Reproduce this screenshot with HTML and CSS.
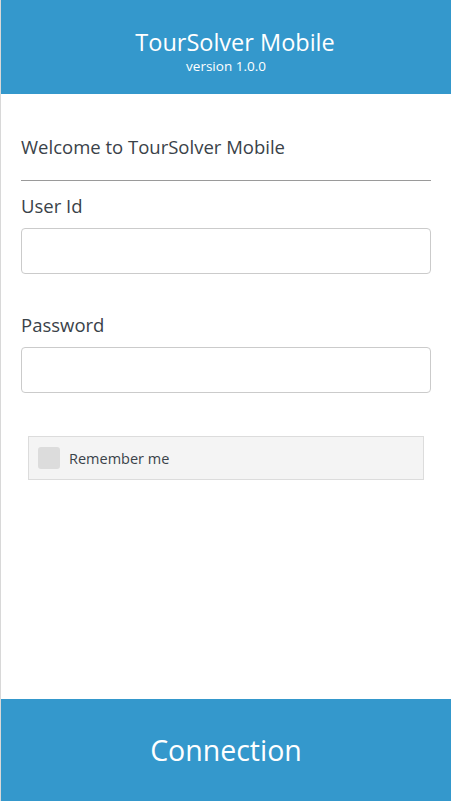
FILE: index.html
```html
<!DOCTYPE html>
<html>
<head>
<meta charset="utf-8">
<link rel="stylesheet" href="styles.css">
</head>
<body>
<div class="page">
  <header class="header">
    <div class="title">TourSolver Mobile</div>
    <div class="version">version 1.0.0</div>
  </header>
  <main class="content">
    <div class="welcome">Welcome to TourSolver Mobile</div>
    <hr class="divider">
    <label class="label">User Id</label>
    <div class="input"></div>
    <label class="label label-pw">Password</label>
    <div class="input"></div>
    <div class="remember">
      <span class="checkbox"></span>
      <span class="remember-text">Remember me</span>
    </div>
  </main>
  <footer class="footer">Connection</footer>
</div>
</body>
</html>
```
FILE: styles.css
```css
html, body {
  margin: 0;
  padding: 0;
  height: 100%;
}
body {
  font-family: "Open Sans", "Noto Sans", sans-serif;
  color: #333d44;
  background: #fff;
}
.page {
  height: 801px;
  border-left: 1px solid #d8d8d8;
  display: flex;
  flex-direction: column;
  box-sizing: border-box;
}
.header {
  background: #3498cc;
  color: #fff;
  height: 94px;
  box-sizing: border-box;
  padding-top: 28px;
  text-align: center;
}
.title {
  padding-left: 18px;
  font-size: 23.5px;
  line-height: 28px;
}
.version {
  margin-top: 2px;
  font-size: 13.5px;
  line-height: 17px;
}
.content {
  flex: 1;
  padding: 0 20px 0 20px;
}
.welcome {
  margin-top: 38px;
  font-size: 18.5px;
  line-height: 30px;
  color: #3a4249;
}
.divider {
  border: 0;
  border-top: 1px solid #9a9a9a;
  margin: 18px 0 0 0;
}
.label {
  display: block;
  margin-top: 11px;
  font-size: 18.5px;
  line-height: 28px;
  color: #3a4249;
}
.label-pw {
  margin-top: 37px;
}
.input {
  margin-top: 8px;
  height: 46px;
  box-sizing: border-box;
  border: 1px solid #cbcbcb;
  border-radius: 4px;
}
.remember {
  margin: 43px 7px 0 7px;
  height: 44px;
  box-sizing: border-box;
  background: #f4f4f4;
  border: 1px solid #dcdcdc;
  display: flex;
  align-items: center;
  padding-left: 9px;
  gap: 9px;
}
.checkbox {
  width: 22px;
  height: 22px;
  background: #dcdcdc;
  border-radius: 3px;
}
.remember-text {
  font-size: 14.5px;
  color: #3a4249;
}
.footer {
  background: #3498cc;
  color: #fff;
  height: 102px;
  display: flex;
  align-items: center;
  justify-content: center;
  font-size: 28.5px;
}
```
